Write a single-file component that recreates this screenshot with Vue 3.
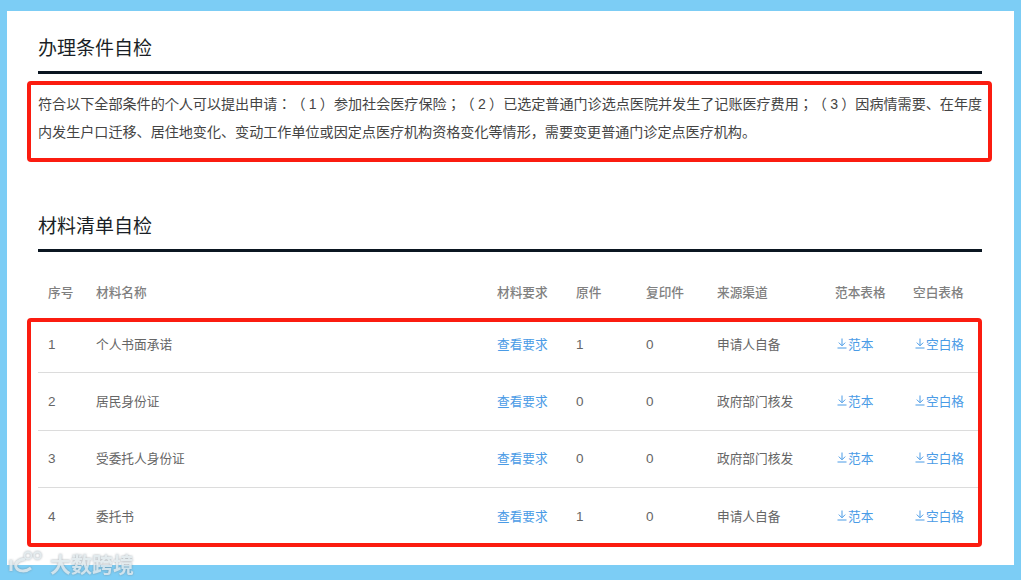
<script setup>
const rows = [
  { no: 1, name: '个人书面承诺', orig: 1, copy: 0, src: '申请人自备' },
  { no: 2, name: '居民身份证', orig: 0, copy: 0, src: '政府部门核发' },
  { no: 3, name: '受委托人身份证', orig: 0, copy: 0, src: '政府部门核发' },
  { no: 4, name: '委托书', orig: 1, copy: 0, src: '申请人自备' },
]
const heads = ['序号', '材料名称', '材料要求', '原件', '复印件', '来源渠道', '范本表格', '空白表格']
</script>

<template>
  <div class="page">
    <main class="panel">
      <h2 class="title">办理条件自检</h2>
      <div class="mark">
        <p class="desc">符合以下全部条件的个人可以提出申请：（ 1 ）参加社会医疗保险；（ 2 ）已选定普通门诊选点医院并发生了记账医疗费用；（ 3 ）因病情需要、在年度内发生户口迁移、居住地变化、变动工作单位或因定点医疗机构资格变化等情形，需要变更普通门诊定点医疗机构。</p>
      </div>

      <h2 class="title second">材料清单自检</h2>
      <section class="table">
        <div class="row head">
          <span v-for="h in heads" :key="h">{{ h }}</span>
        </div>
        <div class="body">
          <div v-for="r in rows" :key="r.no" class="row item">
            <span class="num">{{ r.no }}</span>
            <span>{{ r.name }}</span>
            <a class="link">查看要求</a>
            <span class="num">{{ r.orig }}</span>
            <span class="num">{{ r.copy }}</span>
            <span>{{ r.src }}</span>
            <a class="link dl">
              <svg width="10" height="11" viewBox="0 0 10 11" fill="none" stroke="currentColor" stroke-width="1"><path d="M5 0.5V7.5M1.8 4.6L5 7.8L8.2 4.6M0.5 10H9.5"/></svg>范本
            </a>
            <a class="link dl">
              <svg width="10" height="11" viewBox="0 0 10 11" fill="none" stroke="currentColor" stroke-width="1"><path d="M5 0.5V7.5M1.8 4.6L5 7.8L8.2 4.6M0.5 10H9.5"/></svg>空白格
            </a>
          </div>
          <div class="outline"></div>
        </div>
      </section>
    </main>
    <div class="watermark">
      <svg width="40" height="24" viewBox="0 0 40 24" fill="none" stroke="currentColor">
        <path d="M3 9V20" stroke-width="3"/>
        <path d="M17 8C9 9 7 13 8 16C10 21 18 21 23 17" stroke-width="3"/>
        <circle cx="20" cy="4.5" r="3.4" stroke-width="1.6"/>
        <circle cx="29.5" cy="4.5" r="3.4" stroke-width="1.6"/>
      </svg>
      <span>大数跨境</span>
    </div>
  </div>
</template>

<style>
html, body { margin: 0; background: #7ccdf5; }
</style>

<style scoped>
.page {
  position: relative;
  width: 1021px;
  height: 580px;
  padding: 11px 7px 15px;
  box-sizing: border-box;
  background: #7ccdf5;
  overflow: hidden;
  font-family: "Liberation Sans", "Noto Sans CJK SC", sans-serif;
  text-spacing-trim: space-all;
}
.panel {
  height: 554px;
  box-sizing: border-box;
  padding: 22px 32px 0 31px;
  background: #fff;
}
.title {
  margin: 0;
  height: 38px;
  line-height: 32px;
  font-size: 19px;
  font-weight: 400;
  color: #1a1f26;
  border-bottom: 3px solid #0b1621;
}
.second { margin-top: 49px; }
.mark {
  margin: 7px -10px 0 -11px;
  height: 81px;
  box-sizing: border-box;
  padding: 5px 0 0 7px;
  border: 4px solid #fb1c10;
  border-radius: 4px;
}
.desc {
  margin: 0;
  width: 946px;
  font-family: "Liberation Sans", "Noto Sans CJK JP", sans-serif;
  font-size: 14.08px;
  word-spacing: -0.65px;
  line-height: 28px;
  color: #444;
}
.table { font-size: 12.7px; color: #666; }
.row {
  display: grid;
  grid-template-columns: 48px 401px 79px 70px 71px 118px 78px 69px;
  padding-left: 10px;
}
.head {
  padding-top: 31px;
  height: 33px;
  line-height: 20px;
  color: #808080;
  font-weight: 500;
}
.body { position: relative; }
.item {
  height: 57.33px;
  box-sizing: border-box;
  align-items: center;
  padding-bottom: 2px;
  border-bottom: 1px solid #dcdcdc;
}
.item:nth-last-child(2) { border-bottom: none; }
.num { padding-top: 2px; font-size: 13.5px; }
.link { color: #4a9be6; }
.dl {
  display: flex;
  align-items: center;
  gap: 1px;
  padding-left: 2px;
}
.outline {
  position: absolute;
  left: -11px;
  top: 2px;
  width: 955px;
  height: 229px;
  box-sizing: border-box;
  border: 4px solid #fb1c10;
  border-radius: 4px;
}
.watermark {
  position: absolute;
  left: 8px;
  top: 551px;
  display: flex;
  align-items: center;
  gap: 2px;
  height: 24px;
  color: #dfe8ec;
  font-size: 21px;
  font-weight: 700;
  opacity: 0.85;
  filter: drop-shadow(0 0 1px rgba(110, 120, 130, 0.7));
}
</style>
